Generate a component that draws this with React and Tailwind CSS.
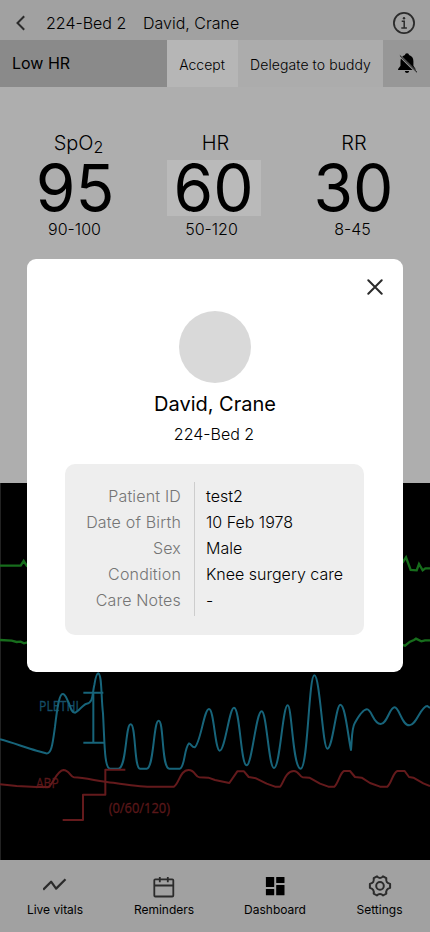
const vitals = [
  { label: <>SpO<span className="relative top-[3px] text-[16px]">2</span></>, value: '95', range: '90-100', box: 'pl-[1px]', labelShift: 'pl-2', rangeShift: '' },
  { label: 'HR', value: '60', range: '50-120', box: 'bg-[#bababa]', labelShift: 'pl-1', rangeShift: 'pr-1' },
  { label: 'RR', value: '30', range: '8-45', box: 'pl-[2px]', labelShift: 'pl-[3px]', rangeShift: '' },
];

const details = [
  ['Patient ID', 'test2'],
  ['Date of Birth', '10 Feb 1978'],
  ['Sex', 'Male'],
  ['Condition', 'Knee surgery care'],
  ['Care Notes', '-'],
];

function Header() {
  return (
    <header className="flex h-10 items-center bg-[#a1a1a1] pt-[6px] pr-[14px] pl-[15px]">
      <svg className="h-4 w-3" viewBox="0 0 12 16" fill="none" stroke="#2b2b2b" strokeWidth="2">
        <path d="M9.2 1.2 2.5 8l6.7 6.8" />
      </svg>
      <span className="ml-[19px] w-[97px] text-[16px] font-light">224-Bed 2</span>
      <span className="flex-1 text-[16px] font-light">David, Crane</span>
      <svg className="size-6" viewBox="0 0 24 24" fill="none" stroke="#2b2b2b" strokeWidth="1.8">
        <circle cx="12" cy="12" r="10.1" />
        <path d="M9.7 10.2h2.5v6.6M9.3 17h5.6" strokeWidth="1.5" />
        <circle cx="12" cy="7.2" r="1.2" fill="#2b2b2b" stroke="none" />
      </svg>
    </header>
  );
}

function AlarmBar() {
  return (
    <div className="flex h-[47px] items-stretch">
      <div className="flex w-[167px] items-center bg-[#8a8a8a] pb-[1px] pl-3 text-[16px]">Low HR</div>
      <button className="w-[71px] bg-[#b6b6b6] pt-[1px] pr-[1px] text-[14px] font-light">Accept</button>
      <button className="w-[145px] bg-[#acacac] pt-[1px] text-[14px] font-light tracking-[0.08px]">Delegate to buddy</button>
      <button className="flex w-[47px] items-center justify-center bg-[#979797] pb-[2px]">
        <svg className="h-[22px] w-[22px]" viewBox="0 0 22 22">
          <path d="M11 1.2c-1.2 0-2 .8-2 1.9C6 4 4.5 6.300 4.500 9.200v4.600L2.100 17v1h17.500v-1l-2.200-3.200V9.200c0-2.900-1.500-5.200-4.400-6.100 0-1.100-.8-1.900-2-1.900zM8.900 19h4.200c-.1 1.300-.9 2-2.100 2s-2-.7-2.100-2z" />
          <path d="M3.600 3.600 21 20.800" stroke="#979797" strokeWidth="2.300" />
          <path d="M3.900 3.500 21 20.300" stroke="#000" strokeWidth=".9" />
        </svg>
      </button>
    </div>
  );
}

function Vitals() {
  return (
    <section className="flex h-[396px] bg-[#aeaeae] pt-[43px] pl-[5px]">
      {vitals.map((v) => (
        <div key={v.value} className="flex w-[139px] flex-col items-center">
          <div className={`h-[30px] text-[20px] leading-[27px] font-light ${v.labelShift}`}>{v.label}</div>
          <div className={`flex h-14 w-[94px] items-center justify-center text-[64px] leading-[56px] ${v.box}`}>{v.value}</div>
          <div className={`mt-[2px] text-[16px] leading-[22px] font-light ${v.rangeShift}`}>{v.range}</div>
        </div>
      ))}
    </section>
  );
}

function Waveforms() {
  return (
    <svg className="block h-[377px] w-[430px] bg-black" viewBox="0 483 430 377" fill="none">
      <path d="M.5 483v377" stroke="#222" />
      <g transform="translate(0 475) scale(.33333)" stroke="#176d1c" strokeWidth="7">
        <path d="M0 272H62L71 258 82 275M1190 270 1208 262 1218 247 1232 285 1250 286 1257 267 1268 286 1276 280H1290" />
        <path d="M0 495 35 497 50 501 62 500 72 505 82 502M1190 505 1215 512 1230 500 1242 495 1248 491 1264 499 1275 496H1290" />
      </g>
      <g transform="translate(0 660) scale(.33333)" strokeWidth="6" strokeLinejoin="round">
        <g fontFamily="'Open Sans', 'Noto Sans', sans-serif" fontSize="46">
          <text x="117" y="152" fill="#154d66" stroke="#154d66" strokeWidth="1" textLength="120" lengthAdjust="spacingAndGlyphs">PLETHI</text>
          <text x="108" y="383" fill="#591719" stroke="#591719" strokeWidth="1" textLength="68" lengthAdjust="spacingAndGlyphs">ABP</text>
          <text x="326" y="460" fill="#591719" stroke="#591719" strokeWidth="1" textLength="184" lengthAdjust="spacingAndGlyphs">(0/60/120)</text>
        </g>
        <g stroke="#17647a">
          <path d="M0 238C40 248 80 265 110 272L138 280C155 283 158 250 165 200 172 140 178 102 188 102 198 102 200 120 207 130 212 145 215 158 225 158 238 155 245 135 260 131 280 128 276 105 283 75 287 50 291 40 295 40 306 45 303 110 309 160 314 250 313 325 330 326H355C380 326 376 193 392 193S402 326 420 326H440C462 326 460 182 476 182S484 326 508 326H540C555 320 552 265 567 250 575 253 575 262 584 262 602 250 612 147 627 147S645 270 659 272C675 272 688 143 702 143 720 143 722 316 740 316 756 316 768 154 785 154 800 154 806 324 822 324 840 324 848 136 863 136 876 136 878 326 902 326 924 326 926 46 943 46 960 46 968 266 982 266 998 266 1008 134 1021 134 1036 134 1044 230 1053 270 1056 240 1055 205 1064 190 1075 170 1090 148 1101 148 1115 148 1120 192 1142 192 1162 192 1168 142 1184 142 1198 142 1205 196 1228 196 1250 196 1262 138 1282 138L1290 144" />
          <path d="M250 98H310M280 98V248M250 248H315" />
        </g>
        <g stroke="#641a1c">
          <path d="M0 373 50 378 110 381H145C160 372 170 332 190 330 208 330 210 350 222 352 260 353 300 366 340 368 380 374 430 380 450 380H522C538 370 540 330 566 330 585 330 585 350 598 352L625 353 645 360 688 369 712 334H732L746 351 768 355 800 371 825 380H840C850 372 855 333 882 333 895 333 900 351 908 352L928 353 960 371 985 380H1003C1015 370 1020 338 1032 333H1050L1065 351 1085 353 1110 369 1140 380H1162C1175 370 1178 338 1192 333H1214L1227 351 1240 353 1270 370 1290 378" />
          <path d="M188 480H249V404H316V329H376" />
        </g>
      </g>
    </svg>
  );
}

function NavItem({ label, width, children }) {
  return (
    <div className={`flex flex-col items-center ${width}`}>
      <svg className="size-6" viewBox="0 0 24 24" fill="none" stroke="#2b2b2b" strokeWidth="1.8">{children}</svg>
      <span className="mt-1 text-[12px] leading-4">{label}</span>
    </div>
  );
}

function BottomNav() {
  return (
    <nav className="flex h-[72px] bg-[#a1a1a1] pt-[14px]">
      <NavItem label="Live vitals" width="w-[110px]">
        <path d="M.2 15.700 8.100 7.700 13.100 14.600 22.500 5.200" strokeWidth="2.200" strokeLinejoin="round" />
      </NavItem>
      <NavItem label="Reminders" width="w-[108px]">
        <rect x="2.300" y="5.300" width="19" height="17.200" rx="1" />
        <path d="M2.300 11.500H21.300M7.800 3v5.300M15.800 3v5.300" />
      </NavItem>
      <NavItem label="Dashboard" width="w-[114px]">
        <g fill="#000" stroke="none">
          <rect x="2.900" y="3" width="8.300" height="10" rx=".5" />
          <rect x="2.900" y="15" width="8.300" height="6.200" rx=".5" />
          <rect x="13.200" y="3" width="8.300" height="6" rx=".5" />
          <rect x="13.200" y="11" width="8.300" height="10.200" rx=".5" />
        </g>
      </NavItem>
      <NavItem label="Settings" width="w-[95px]">
        <path strokeWidth="2" strokeLinejoin="round" d="M9 2.300C9.900 3.600 10.900 3.900 12 3.900S14.100 3.600 15 2.300L18.300 4.200C18 5.800 18.200 6.900 18.800 7.900S20.600 9.400 22.100 9.900V13.900C20.600 14.400 19.400 14.900 18.800 15.900S18 18 18.300 19.600L15 21.500C14.100 20.200 13.100 19.900 12 19.900S9.900 20.200 9 21.500L5.700 19.600C6 18 5.800 16.900 5.200 15.900S3.400 14.400 1.900 13.900V9.900C3.400 9.400 4.600 8.900 5.200 7.900S6 5.800 5.700 4.200Z" />
        <circle cx="12" cy="11.900" r="3.800" strokeWidth="2" />
      </NavItem>
    </nav>
  );
}

function PatientDialog() {
  return (
    <div className="absolute top-[259px] left-[27px] flex h-[413px] w-[376px] flex-col items-center rounded-[9px] bg-white">
      <button className="mt-5 mr-5 self-end">
        <svg className="size-4" viewBox="0 0 16 16" stroke="#2b2b2b" strokeWidth="2" strokeLinecap="round">
          <path d="m1.300 1.300 13.400 13.400M14.700 1.300 1.300 14.700" />
        </svg>
      </button>
      <div className="mt-4 size-[72px] shrink-0 rounded-full bg-[#d9d9d9]" />
      <h1 className="mt-[7px] text-[20px] leading-7">David, Crane</h1>
      <p className="mt-1 pr-[2px] text-[16px] leading-6 font-light">224-Bed 2</p>
      <div className="mt-[18px] mr-[1px] flex h-[171px] w-[299px] rounded-[10px] bg-[#eee] pt-[18px] text-[16px] leading-[26px] font-light">
        <div className="h-[134px] w-[130px] border-r border-[#cdcdcd] pt-[1px] pr-[13px] text-right tracking-[0.18px] text-[#757575]">
          {details.map(([k]) => <div key={k}>{k}</div>)}
        </div>
        <div className="pt-[1px] pl-[11px] text-black">
          {details.map(([k, v]) => <div key={k}>{v}</div>)}
        </div>
      </div>
    </div>
  );
}

export default function App() {
  return (
    <main className="relative h-[932px] w-[430px] overflow-hidden bg-[#aeaeae] font-[Inter,sans-serif] text-black">
      <Header />
      <AlarmBar />
      <Vitals />
      <Waveforms />
      <BottomNav />
      <PatientDialog />
    </main>
  );
}
